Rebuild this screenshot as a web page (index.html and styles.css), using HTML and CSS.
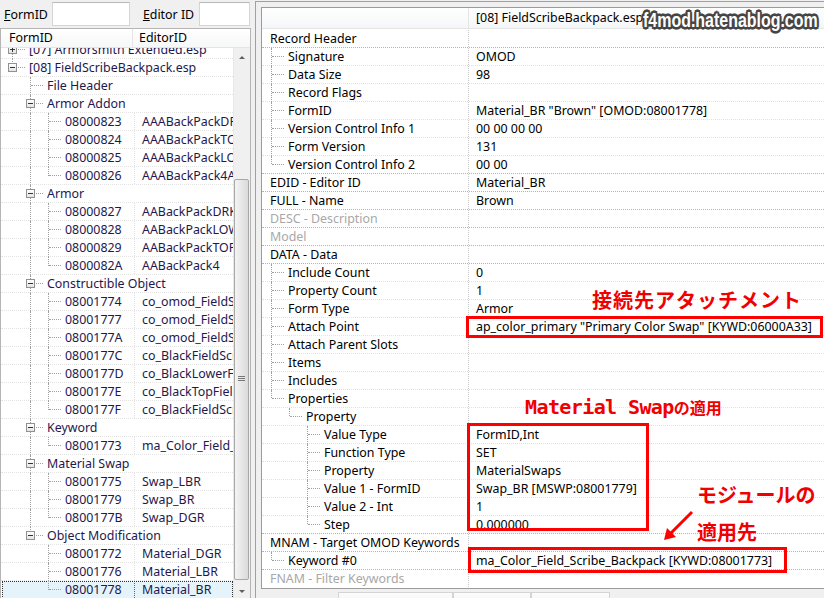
FILE: index.html
```html
<!DOCTYPE html>
<html lang="ja">
<head>
    <meta charset="UTF-8">
    <title>FieldScribeBackpack.esp</title>
    <link rel="stylesheet" href="styles.css">
</head>
<body>

<div class="app">
    <!-- 左: レコード一覧 -->
    <div class="left">
        <div class="search">
            <label><u>F</u>ormID</label>
            <input type="text" class="in-id">
            <label class="lab2"><u>E</u>ditor ID</label>
            <input type="text" class="in-ed">
        </div>
        <div class="list">
            <div class="list-head">
                <div class="h1">FormID</div>
                <div class="h2">EditorID</div>
            </div>
            <div class="list-body">
                <div class="rows">
                    <div class="rows-in">
                        <div class="row"><i class="g t"><b class="x plus"></b></i><span class="n">[07] Armorsmith Extended.esp</span></div>
                        <div class="row"><i class="g l"><b class="x"></b></i><span class="n">[08] FieldScribeBackpack.esp</span></div>
                        <div class="row"><i class="g"></i><i class="g t"></i><span class="n">File Header</span></div>

                        <div class="row"><i class="g"></i><i class="g t"><b class="x"></b></i><span class="n">Armor Addon</span></div>
                        <div class="row"><div class="c1"><i class="g"></i><i class="g v"></i><i class="g t"></i><span class="n">08000823</span></div><div class="c2">AAABackPackDRK</div></div>
                        <div class="row"><div class="c1"><i class="g"></i><i class="g v"></i><i class="g t"></i><span class="n">08000824</span></div><div class="c2">AAABackPackTOP</div></div>
                        <div class="row"><div class="c1"><i class="g"></i><i class="g v"></i><i class="g t"></i><span class="n">08000825</span></div><div class="c2">AAABackPackLOW</div></div>
                        <div class="row"><div class="c1"><i class="g"></i><i class="g v"></i><i class="g l"></i><span class="n">08000826</span></div><div class="c2">AAABackPack4ALL</div></div>

                        <div class="row"><i class="g"></i><i class="g t"><b class="x"></b></i><span class="n">Armor</span></div>
                        <div class="row"><div class="c1"><i class="g"></i><i class="g v"></i><i class="g t"></i><span class="n">08000827</span></div><div class="c2">AABackPackDRK</div></div>
                        <div class="row"><div class="c1"><i class="g"></i><i class="g v"></i><i class="g t"></i><span class="n">08000828</span></div><div class="c2">AABackPackLOW</div></div>
                        <div class="row"><div class="c1"><i class="g"></i><i class="g v"></i><i class="g t"></i><span class="n">08000829</span></div><div class="c2">AABackPackTOP</div></div>
                        <div class="row"><div class="c1"><i class="g"></i><i class="g v"></i><i class="g l"></i><span class="n">0800082A</span></div><div class="c2">AABackPack4</div></div>

                        <div class="row"><i class="g"></i><i class="g t"><b class="x"></b></i><span class="n">Constructible Object</span></div>
                        <div class="row"><div class="c1"><i class="g"></i><i class="g v"></i><i class="g t"></i><span class="n">08001774</span></div><div class="c2">co_omod_FieldScribe_LBR</div></div>
                        <div class="row"><div class="c1"><i class="g"></i><i class="g v"></i><i class="g t"></i><span class="n">08001777</span></div><div class="c2">co_omod_FieldScribe_BR</div></div>
                        <div class="row"><div class="c1"><i class="g"></i><i class="g v"></i><i class="g t"></i><span class="n">0800177A</span></div><div class="c2">co_omod_FieldScribe_DGR</div></div>
                        <div class="row"><div class="c1"><i class="g"></i><i class="g v"></i><i class="g t"></i><span class="n">0800177C</span></div><div class="c2">co_BlackFieldScribe</div></div>
                        <div class="row"><div class="c1"><i class="g"></i><i class="g v"></i><i class="g t"></i><span class="n">0800177D</span></div><div class="c2">co_BlackLowerField</div></div>
                        <div class="row"><div class="c1"><i class="g"></i><i class="g v"></i><i class="g t"></i><span class="n">0800177E</span></div><div class="c2">co_BlackTopField</div></div>
                        <div class="row"><div class="c1"><i class="g"></i><i class="g v"></i><i class="g l"></i><span class="n">0800177F</span></div><div class="c2">co_BlackFieldScribe4</div></div>

                        <div class="row"><i class="g"></i><i class="g t"><b class="x"></b></i><span class="n">Keyword</span></div>
                        <div class="row"><div class="c1"><i class="g"></i><i class="g v"></i><i class="g l"></i><span class="n">08001773</span></div><div class="c2">ma_Color_Field_Scribe</div></div>

                        <div class="row"><i class="g"></i><i class="g t"><b class="x"></b></i><span class="n">Material Swap</span></div>
                        <div class="row"><div class="c1"><i class="g"></i><i class="g v"></i><i class="g t"></i><span class="n">08001775</span></div><div class="c2">Swap_LBR</div></div>
                        <div class="row"><div class="c1"><i class="g"></i><i class="g v"></i><i class="g t"></i><span class="n">08001779</span></div><div class="c2">Swap_BR</div></div>
                        <div class="row"><div class="c1"><i class="g"></i><i class="g v"></i><i class="g l"></i><span class="n">0800177B</span></div><div class="c2">Swap_DGR</div></div>

                        <div class="row"><i class="g"></i><i class="g l"><b class="x"></b></i><span class="n">Object Modification</span></div>
                        <div class="row"><div class="c1"><i class="g"></i><i class="g"></i><i class="g t"></i><span class="n">08001772</span></div><div class="c2">Material_DGR</div></div>
                        <div class="row"><div class="c1"><i class="g"></i><i class="g"></i><i class="g t"></i><span class="n">08001776</span></div><div class="c2">Material_LBR</div></div>
                        <div class="row sel"><div class="c1"><i class="g"></i><i class="g"></i><i class="g l"></i><span class="n">08001778</span></div><div class="c2">Material_BR</div></div>
                    </div>
                </div>
                <div class="sb">
                    <div class="arr up"></div>
                    <div class="track"><div class="thumb"><span class="grip"></span></div></div>
                    <div class="arr down"></div>
                </div>
            </div>
        </div>
    </div>

    <!-- 右: レコード内容 -->
    <div class="right">
        <div class="tree">
            <div class="r head"><div class="k"></div><div class="v">[08] FieldScribeBackpack.esp</div></div>

            <div class="r top"><div class="k"><span class="n">Record Header</span></div><div class="v"></div></div>
            <div class="r"><div class="k"><i class="g t"></i><span class="n">Signature</span></div><div class="v">OMOD</div></div>
            <div class="r"><div class="k"><i class="g t"></i><span class="n">Data Size</span></div><div class="v">98</div></div>
            <div class="r"><div class="k"><i class="g t"></i><span class="n">Record Flags</span></div><div class="v"></div></div>
            <div class="r"><div class="k"><i class="g t"></i><span class="n">FormID</span></div><div class="v">Material_BR "Brown" [OMOD:08001778]</div></div>
            <div class="r"><div class="k"><i class="g t"></i><span class="n">Version Control Info 1</span></div><div class="v">00 00 00 00</div></div>
            <div class="r"><div class="k"><i class="g t"></i><span class="n">Form Version</span></div><div class="v">131</div></div>
            <div class="r"><div class="k"><i class="g l"></i><span class="n">Version Control Info 2</span></div><div class="v">00 00</div></div>
            <div class="r top"><div class="k"><span class="n">EDID - Editor ID</span></div><div class="v">Material_BR</div></div>
            <div class="r top"><div class="k"><span class="n">FULL - Name</span></div><div class="v">Brown</div></div>
            <div class="r top dim"><div class="k"><span class="n">DESC - Description</span></div><div class="v"></div></div>
            <div class="r top dim"><div class="k"><span class="n">Model</span></div><div class="v"></div></div>
            <div class="r top"><div class="k"><span class="n">DATA - Data</span></div><div class="v"></div></div>
            <div class="r"><div class="k"><i class="g t"></i><span class="n">Include Count</span></div><div class="v">0</div></div>
            <div class="r"><div class="k"><i class="g t"></i><span class="n">Property Count</span></div><div class="v">1</div></div>
            <div class="r"><div class="k"><i class="g t"></i><span class="n">Form Type</span></div><div class="v">Armor</div></div>
            <div class="r"><div class="k"><i class="g t"></i><span class="n">Attach Point</span></div><div class="v">ap_color_primary "Primary Color Swap" [KYWD:06000A33]</div></div>
            <div class="r"><div class="k"><i class="g t"></i><span class="n">Attach Parent Slots</span></div><div class="v"></div></div>
            <div class="r"><div class="k"><i class="g t"></i><span class="n">Items</span></div><div class="v"></div></div>
            <div class="r"><div class="k"><i class="g t"></i><span class="n">Includes</span></div><div class="v"></div></div>
            <div class="r"><div class="k"><i class="g l"></i><span class="n">Properties</span></div><div class="v"></div></div>
            <div class="r"><div class="k"><i class="g"></i><i class="g l"></i><span class="n">Property</span></div><div class="v"></div></div>
            <div class="r"><div class="k"><i class="g"></i><i class="g"></i><i class="g t"></i><span class="n">Value Type</span></div><div class="v">FormID,Int</div></div>
            <div class="r"><div class="k"><i class="g"></i><i class="g"></i><i class="g t"></i><span class="n">Function Type</span></div><div class="v">SET</div></div>
            <div class="r"><div class="k"><i class="g"></i><i class="g"></i><i class="g t"></i><span class="n">Property</span></div><div class="v">MaterialSwaps</div></div>
            <div class="r"><div class="k"><i class="g"></i><i class="g"></i><i class="g t"></i><span class="n">Value 1 - FormID</span></div><div class="v">Swap_BR [MSWP:08001779]</div></div>
            <div class="r"><div class="k"><i class="g"></i><i class="g"></i><i class="g t"></i><span class="n">Value 2 - Int</span></div><div class="v">1</div></div>
            <div class="r"><div class="k"><i class="g"></i><i class="g"></i><i class="g l"></i><span class="n">Step</span></div><div class="v">0.000000</div></div>
            <div class="r top"><div class="k"><span class="n">MNAM - Target OMOD Keywords</span></div><div class="v"></div></div>
            <div class="r"><div class="k"><i class="g l"></i><span class="n">Keyword #0</span></div><div class="v">ma_Color_Field_Scribe_Backpack [KYWD:08001773]</div></div>
            <div class="r top dim"><div class="k"><span class="n">FNAM - Filter Keywords</span></div><div class="v"></div></div>
        </div>
        <div class="tabs">
            <div class="tab t1">Referenced By (1)</div>
            <div class="tab t2">Messages</div>
            <div class="tab t3">Information</div>
        </div>
    </div>
</div>

<!-- 注釈 -->
<div class="mark">f4mod.hatenablog.com</div>

<div class="box box-attach"></div>
<div class="box box-swap"></div>
<div class="box box-kw"></div>

<div class="note note-attach">接続先アタッチメント</div>
<div class="note note-swap"><span class="mono">Material Swap</span><span class="small">の適用</span></div>
<div class="note note-mod1">モジュールの</div>
<div class="note note-mod2">適用先</div>

<svg class="arrow" width="40" height="36" viewBox="0 0 40 36">
    <line x1="32" y1="4" x2="9" y2="27" stroke="#f00" stroke-width="3"/>
    <polygon points="4,32 7,20 16,29" fill="#f00"/>
</svg>

</body>
</html>
```

FILE: styles.css
```css
body {
    margin: 0;
    width: 824px;
    height: 598px;
    overflow: hidden;
    position: relative;
    background-color: #f0f0f0;
    font-family: "Noto Sans", "Noto Sans CJK JP", sans-serif;
    font-size: 12.4px;
    color: #000;
}

.app {
    display: flex;
    height: 598px;
}

/* ---------- 左パネル ---------- */

.left {
    width: 251px;
    flex: none;
    display: flex;
    flex-direction: column;
}

.search {
    height: 28px;
    display: flex;
    align-items: center;
    padding-left: 4px;
    white-space: nowrap;
    overflow: hidden;
}

.search label {
    margin-right: 4px;
    flex: none;
}

.search input {
    height: 24px;
    flex: none;
    box-sizing: border-box;
    border: 1px solid #d5d5d5;
    border-top-color: #b8b8b8;
    background: #fff;
    margin: 0;
}

.in-id {
    width: 78px;
}

.search .lab2 {
    margin-left: 13px;
    margin-right: 5px;
}

.in-ed {
    width: 51px;
}

.list {
    flex: 1;
    border: 1px solid #b5b5b5;
    border-bottom: none;
    background: #fff;
    display: flex;
    flex-direction: column;
    min-height: 0;
}

.list-head {
    height: 19px;
    box-sizing: border-box;
    display: flex;
    border-bottom: 1px solid #e5e5e5;
    background: linear-gradient(#fff, #f6f7f8);
    line-height: 18px;
}

.list-head .h1 {
    width: 132px;
    border-right: 1px solid #e5e5e5;
    padding-left: 8px;
    box-sizing: border-box;
}

.list-head .h2 {
    padding-left: 6px;
}

.list-body {
    flex: 1;
    display: flex;
    min-height: 0;
}

.rows {
    flex: 1;
    overflow: hidden;
}

.rows-in {
    margin-top: -7px;
}

.row {
    height: 18px;
    box-sizing: border-box;
    display: flex;
    align-items: stretch;
    padding-left: 2px;
    border-bottom: 1px dotted #e4e4e4;
    color: #1e1850;
    white-space: nowrap;
    line-height: 17px;
}

.row .c1 {
    width: 131px;
    flex: none;
    display: flex;
    border-right: 1px dotted #e0e0e0;
}

.row .c2 {
    flex: 1;
    overflow: hidden;
    padding-left: 7px;
}

.row.sel {
    background-color: #e5f3fb;
    outline: 1px dotted #333;
    outline-offset: -1px;
    margin-left: 1px;
    padding-left: 1px;
}

.row.sel .c1 {
    border-right-color: #666;
}

/* ツリーの罫線 */

.g {
    width: 18px;
    flex: none;
    position: relative;
}

.g.v::before,
.g.t::before,
.g.l::before {
    content: "";
    position: absolute;
    left: 9px;
    top: 0;
    bottom: -1px;
    border-left: 1px dotted #a0a0a0;
}

.g.l::before {
    bottom: auto;
    height: 9px;
}

.g.t::after,
.g.l::after {
    content: "";
    position: absolute;
    left: 10px;
    top: 8px;
    width: 12px;
    border-top: 1px dotted #a0a0a0;
}

.x {
    position: absolute;
    left: 5px;
    top: 4px;
    width: 9px;
    height: 9px;
    box-sizing: border-box;
    border: 1px solid #919191;
    background: linear-gradient(#fff, #e4e4e4);
    z-index: 1;
}

.x::after {
    content: "";
    position: absolute;
    left: 1px;
    top: 3px;
    width: 5px;
    height: 1px;
    background: #333;
}

.x.plus::before {
    content: "";
    position: absolute;
    left: 3px;
    top: 1px;
    width: 1px;
    height: 5px;
    background: #333;
}

.n {
    padding-left: 8px;
}

/* スクロールバー */

.sb {
    width: 17px;
    flex: none;
    display: flex;
    flex-direction: column;
    background: #f0f0f0;
    border-left: 1px solid #e8e8e8;
    box-sizing: border-box;
}

.arr {
    height: 17px;
    flex: none;
    position: relative;
}

.arr::after {
    content: "";
    position: absolute;
    left: 5px;
    border-left: 3px solid transparent;
    border-right: 3px solid transparent;
}

.arr.up::after {
    top: 8px;
    border-bottom: 3px solid #606060;
}

.arr.down::after {
    top: 9px;
    border-top: 3px solid #606060;
}

.track {
    flex: 1;
    padding-top: 114px;
    padding-bottom: 1px;
    display: flex;
    flex-direction: column;
}

.thumb {
    flex: 1;
    margin: 0 1px 0 0;
    border: 1px solid #a8a8a8;
    border-radius: 2px;
    background: linear-gradient(to right, #f4f4f4, #dadada);
    position: relative;
}

.grip {
    position: absolute;
    left: 3px;
    top: 196px;
    width: 7px;
    height: 5px;
    background: repeating-linear-gradient(#777 0 1px, transparent 1px 2px);
}

/* ---------- 右パネル ---------- */

.right {
    flex: 1;
    margin-left: 4px;
    margin-top: 1px;
    height: 597px;
    box-sizing: border-box;
    border-top: 1px solid #a0a0a0;
    border-left: 1px solid #a0a0a0;
    padding: 5px 0 0 5px;
    display: flex;
    flex-direction: column;
    min-width: 0;
}

.tree {
    height: 582px;
    flex: none;
    box-sizing: border-box;
    border: 1px solid #9b9b9b;
    border-right: none;
    background: #fff;
    overflow: hidden;
}

.r {
    height: 18px;
    box-sizing: border-box;
    display: flex;
    border-top: 1px dotted #e2e2e2;
    white-space: nowrap;
    line-height: 17px;
}

.r.top,
.r.top + .r {
    border-top-color: #b4b4b4;
}

.r .k {
    width: 207px;
    flex: none;
    display: flex;
    box-sizing: border-box;
    border-right: 1px dotted #c8c8c8;
}

.r .v {
    flex: 1;
    padding-left: 7px;
    overflow: hidden;
}

.r.dim {
    color: #a8a8a8;
}

.r .g.l::before {
    height: 8px;
}

.r.head {
    height: 21px;
    border-top: none;
    border-bottom: 1px solid #e5e5e5;
    background: linear-gradient(#fff, #f5f6f7);
    line-height: 20px;
}

.r.head .k {
    border-right: 1px solid #e5e5e5;
}

.tree .r.head + .r {
    border-top-color: transparent;
}

.tabs {
    display: flex;
    padding-left: 77px;
    margin-top: 3px;
}

.tab {
    height: 20px;
    box-sizing: border-box;
    border: 1px solid #d4d4d4;
    border-bottom: none;
    background: linear-gradient(#fcfcfc, #eee);
    padding: 2px 0 0 7px;
}

.t1 { width: 115px; }
.t2 { width: 78px; }
.t3 { width: 79px; }

/* ---------- 注釈 ---------- */

.mark {
    position: absolute;
    left: 643px;
    top: 8px;
    font-family: "Liberation Sans", sans-serif;
    font-weight: bold;
    font-size: 21px;
    line-height: 24px;
    color: #fff;
    transform: scaleX(0.76);
    transform-origin: 0 0;
    text-shadow:
        2px 0 #454545, -2px 0 #454545, 0 2px #454545, 0 -2px #454545,
        2px 2px #454545, -2px -2px #454545, 2px -2px #454545, -2px 2px #454545,
        1px 2px #454545, 2px 1px #454545, -1px -2px #454545, -2px -1px #454545,
        3px 0 #888, -3px 0 #888, 0 3px #888, 0 -3px #888;
}

.box {
    position: absolute;
    border: 3px solid #ff0000;
    box-sizing: border-box;
}

.box-attach {
    left: 466px;
    top: 316px;
    width: 357px;
    height: 22px;
}

.box-swap {
    left: 467px;
    top: 423px;
    width: 182px;
    height: 108px;
}

.box-kw {
    left: 468px;
    top: 547px;
    width: 319px;
    height: 26px;
}

.note {
    position: absolute;
    font-family: "Noto Sans CJK JP", sans-serif;
    font-weight: bold;
    font-size: 20px;
    line-height: 1;
    color: #f00000;
    white-space: nowrap;
}

.note-attach {
    left: 592px;
    top: 290px;
    letter-spacing: 1px;
}

.note-swap {
    left: 525px;
    top: 396px;
}

.note-swap .mono {
    font-family: "DejaVu Sans Mono", monospace;
    font-size: 20px;
    letter-spacing: -0.6px;
}

.note-swap .small {
    font-size: 16px;
}

.note-mod1 {
    left: 697px;
    top: 485px;
}

.note-mod2 {
    left: 697px;
    top: 522px;
}

.arrow {
    position: absolute;
    left: 660px;
    top: 508px;
}
```
